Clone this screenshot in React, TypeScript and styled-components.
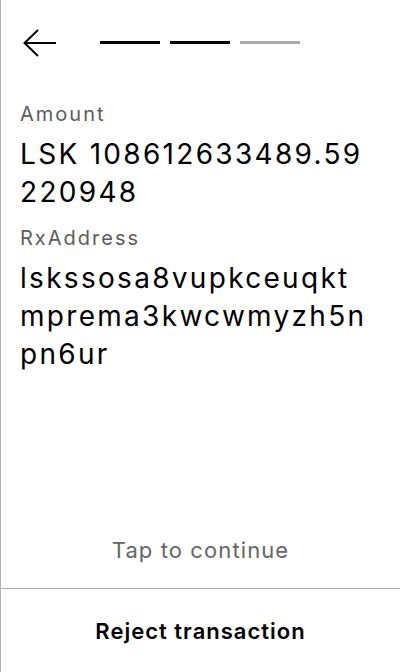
import React from "react";
import styled, { createGlobalStyle } from "styled-components";

const Global = createGlobalStyle`
  html, body { margin: 0; padding: 0; background: #fff; }
  body { font-family: Inter, "Noto Sans", sans-serif; }
`;

const Screen = styled.div`
  box-sizing: border-box;
  width: 400px;
  height: 672px;
  border-left: 1px solid #b0b0b0;
  display: flex;
  flex-direction: column;
  background: #fff;
`;

const Header = styled.div`
  display: flex;
  align-items: center;
  padding: 29px 0 0 22px;
  height: 28px;
`;

const BackButton = styled.button`
  border: 0;
  background: none;
  padding: 0;
  width: 34px;
  height: 28px;
  display: flex;
  align-items: center;
  cursor: pointer;
`;

const Steps = styled.div`
  display: flex;
  gap: 10px;
  margin-left: 43px;
  margin-top: -2px;
`;

const Step = styled.div<{ $done: boolean }>`
  width: 60px;
  height: 3px;
  background: ${(p) => (p.$done ? "#000" : "#aaaaaa")};
`;

const Body = styled.div`
  flex: 1;
  padding: 45px 0 0 19px;
`;

const Label = styled.div`
  font-size: 20px;
  line-height: 24px;
  letter-spacing: 2px;
  color: #5c5c5c;
  margin-bottom: 9px;
`;

const Value = styled.div`
  width: 350px;
  font-size: 28px;
  font-weight: 400;
  line-height: 38px;
  letter-spacing: 2.3px;
  color: #000;
  word-break: break-all;
  margin-bottom: 15px;
`;

const Tap = styled.div`
  text-align: center;
  font-size: 22px;
  line-height: 26px;
  letter-spacing: 1.1px;
  color: #666;
  padding-bottom: 25px;
`;

const Reject = styled.button`
  box-sizing: border-box;
  border: 0;
  border-top: 1px solid #aaaaaa;
  background: #fff;
  height: 84px;
  font-family: Inter, "Noto Sans", sans-serif;
  font-weight: 600;
  font-size: 22px;
  line-height: 26px;
  letter-spacing: 1px;
  color: #000;
  padding: 0;
  cursor: pointer;
`;

export default function App() {
  return (
    <>
      <Global />
      <Screen>
        <Header>
          <BackButton aria-label="Back">
            <svg width="34" height="28" viewBox="0 0 34 28" fill="none">
              <path d="M15 1 L1.5 14 L15 27 M1.5 14 H33" stroke="#000" strokeWidth="2" />
            </svg>
          </BackButton>
          <Steps>
            <Step $done />
            <Step $done />
            <Step $done={false} />
          </Steps>
        </Header>
        <Body>
          <Label>Amount</Label>
          <Value>LSK 108612633489.59220948</Value>
          <Label>RxAddress</Label>
          <Value>lskssosa8vupkceuqktmprema3kwcwmyzh5npn6ur</Value>
        </Body>
        <Tap>Tap to continue</Tap>
        <Reject>Reject transaction</Reject>
      </Screen>
    </>
  );
}
